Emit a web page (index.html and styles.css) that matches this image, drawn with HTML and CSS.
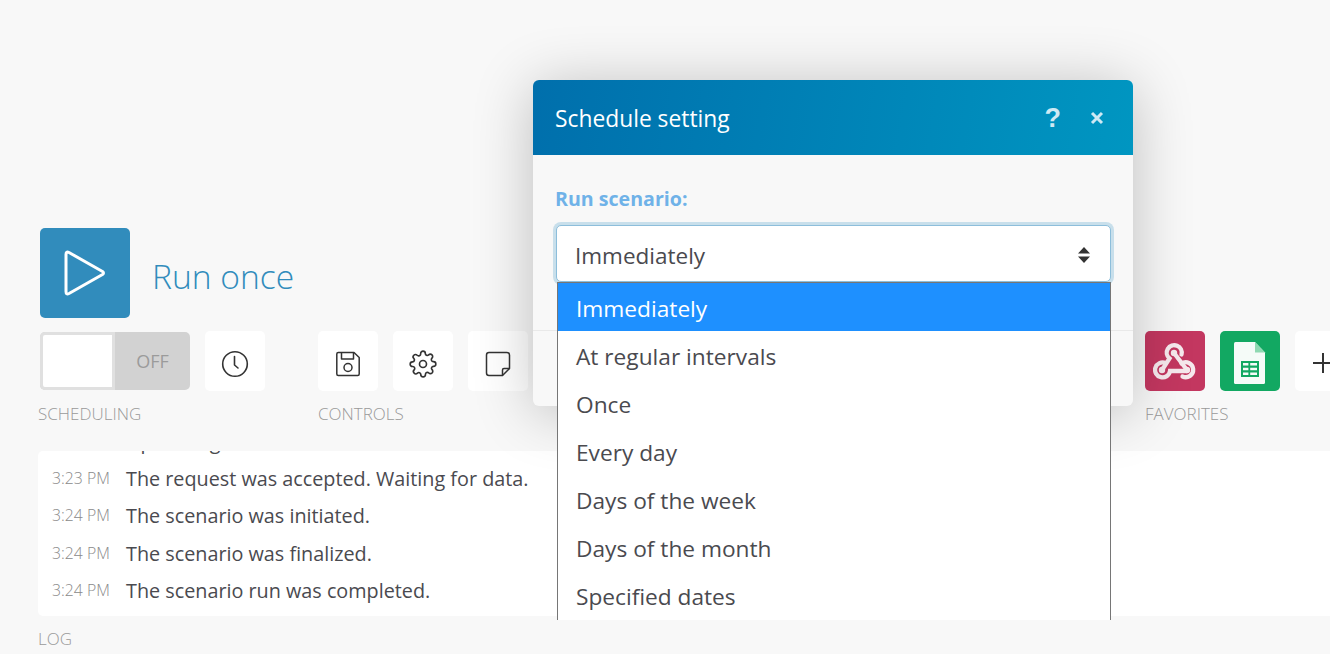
FILE: index.html
```html
<!DOCTYPE html>
<html lang="en">
<head>
<meta charset="utf-8">
<title>Schedule setting</title>
<link rel="stylesheet" href="styles.css">
</head>
<body>
<main class="page">
  <section class="run">
    <button class="run-tile" aria-label="Run once">
      <svg width="44" height="48" viewBox="0 0 44 48"><path d="M3 5.500V42.500Q3 46 6 44.500L39.500 25.500Q41.500 24 39.500 22.500L6 3.500Q3 2 3 5.500z" fill="none" stroke="#fff" stroke-width="3" stroke-linejoin="round"/></svg>
    </button>
    <span class="run-label">Run once</span>
  </section>

  <section class="toolbar">
    <div class="group group-scheduling">
      <div class="tools">
        <div class="toggle"><span class="knob"></span><span class="off">OFF</span></div>
        <button class="tool" aria-label="Schedule">
          <svg width="28" height="28" viewBox="0 0 28 28" fill="none" stroke="#333" stroke-width="1.600"><circle cx="14" cy="14" r="12.300"/><path d="M13.500 6.500v8.500l3.500 3" stroke-linecap="round" stroke-linejoin="round"/></svg>
        </button>
      </div>
      <div class="group-label">SCHEDULING</div>
    </div>
    <div class="group group-controls">
      <div class="tools">
        <button class="tool" aria-label="Save">
          <svg width="28" height="28" viewBox="0 0 28 28" fill="none" stroke="#333" stroke-width="1.500" stroke-linejoin="round"><path d="M2.800 4q0-1.500 1.500-1.500h15.700l5.200 5v16.500q0 1.500-1.500 1.500H4.300q-1.500 0-1.500-1.500z"/><path d="M7.500 2.500v6.500h12V2.500"/><circle cx="14" cy="17.500" r="4"/></svg>
        </button>
        <button class="tool" aria-label="Settings">
          <svg width="28" height="28" viewBox="0 0 24 24" fill="none" stroke="#333" stroke-width="1.400" stroke-linecap="round" stroke-linejoin="round"><circle cx="12" cy="12" r="3"/><path d="M19.400 15a1.650 1.650 0 0 0 .33 1.820l.06.060a2 2 0 1 1-2.830 2.830l-.06-.060a1.650 1.650 0 0 0-2.800 1.170V21a2 2 0 1 1-4 0v-.09a1.650 1.650 0 0 0-2.800-1.110l-.06.060a2 2 0 1 1-2.830-2.830l.06-.060a1.650 1.650 0 0 0-1.170-2.800H3a2 2 0 1 1 0-4h.09a1.650 1.650 0 0 0 1.110-2.800l-.06-.060a2 2 0 1 1 2.830-2.830l.06.060a1.650 1.650 0 0 0 1.820.33H9a1.650 1.650 0 0 0 1-1.510V3a2 2 0 1 1 4 0v.09a1.650 1.650 0 0 0 2.800 1.110l.06-.060a2 2 0 1 1 2.830 2.830l-.06.060a1.650 1.650 0 0 0-.33 1.820V9a1.650 1.650 0 0 0 1.510 1H21a2 2 0 1 1 0 4h-.09a1.650 1.650 0 0 0-1.510 1z"/></svg>
        </button>
        <button class="tool" aria-label="Notes">
          <svg width="28" height="28" viewBox="0 0 28 28" fill="none" stroke="#333" stroke-width="1.500" stroke-linejoin="round"><path d="M18.500 25.500H5q-2.500 0-2.500-2.500V5q0-2.500 2.500-2.500h18q2.500 0 2.500 2.500v13.500z"/><path d="M18.500 25.500v-5.500q0-1.500 1.500-1.500h5.500"/></svg>
        </button>
      </div>
      <div class="group-label">CONTROLS</div>
    </div>
    <div class="group group-favorites">
      <div class="tools">
        <span class="fav fav-webhook">
          <svg width="44" height="44" viewBox="0 0 44 44" fill="none" stroke="#f6e9ed" stroke-width="4.300" stroke-linecap="round"><path d="M9 31 16.500 19.500A7.500 7.500 0 1 1 28.500 15.500"/><path d="M21 14 34 31"/><path d="M12.500 24A7.500 7.500 0 1 0 17 32H34"/><path d="M28.500 24.500A7.500 7.500 0 1 1 29.500 37.500"/><circle cx="21" cy="14" r="3.200" fill="#f6e9ed" stroke="none"/><circle cx="9" cy="31" r="3.200" fill="#f6e9ed" stroke="none"/><circle cx="34" cy="31" r="3.200" fill="#f6e9ed" stroke="none"/></svg>
        </span>
        <span class="fav fav-sheets">
          <svg width="32" height="42" viewBox="0 0 32 42"><path d="M1.500 0H21l10 10.500V40.500q0 1.500-1.500 1.500h-28Q0 42 0 40.500V1.500Q0 0 1.500 0z" fill="#f5fbf8"/><path d="M21 0l10 10.500H21z" fill="#8fd9b2"/><path d="M7 19h18v16H7zM9 21v2.600h5.400V21zm7.200 0v2.600h6.800V21zM9 25.700v2.600h5.400v-2.600zm7.200 0v2.600h6.800v-2.600zM9 30.400V33h5.400v-2.600zm7.200 0V33h6.800v-2.600z" fill="#12a862" fill-rule="evenodd"/></svg>
        </span>
        <button class="tool tool-plus" aria-label="Add favorite">
          <svg width="22" height="22" viewBox="0 0 22 22" stroke="#333" stroke-width="2"><path d="M11 1v20M1 11h20"/></svg>
        </button>
      </div>
      <div class="group-label">FAVORITES</div>
    </div>
  </section>

  <section class="log">
    <div class="log-list">
      <div class="log-row"><span class="time">3:23 PM</span><span class="msg">Uploading data.</span></div>
      <div class="log-row"><span class="time">3:23 PM</span><span class="msg">The request was accepted. Waiting for data.</span></div>
      <div class="log-row"><span class="time">3:24 PM</span><span class="msg">The scenario was initiated.</span></div>
      <div class="log-row"><span class="time">3:24 PM</span><span class="msg">The scenario was finalized.</span></div>
      <div class="log-row"><span class="time">3:24 PM</span><span class="msg">The scenario run was completed.</span></div>
    </div>
    <div class="group-label log-label">LOG</div>
  </section>
</main>

<div class="modal" role="dialog" aria-label="Schedule setting">
  <header class="modal-head">
    <h2 class="modal-title">Schedule setting</h2>
    <span class="modal-actions">
      <span class="help">?</span>
      <svg class="close" width="14" height="14" viewBox="0 0 14 14" stroke="#cfe9f4" stroke-width="3"><path d="M2 2l10 10M12 2 2 12"/></svg>
    </span>
  </header>
  <div class="modal-body">
    <label class="field-label">Run scenario:</label>
    <div class="select-wrap">
      <div class="select">
        <span>Immediately</span>
        <svg width="12" height="16" viewBox="0 0 12 16" fill="#333"><path d="M6 0l6 6.500H0zM6 16 0 9.500h12z"/></svg>
      </div>
      <ul class="options">
        <li class="option selected">Immediately</li>
        <li class="option">At regular intervals</li>
        <li class="option">Once</li>
        <li class="option">Every day</li>
        <li class="option">Days of the week</li>
        <li class="option">Days of the month</li>
        <li class="option">Specified dates</li>
      </ul>
    </div>
  </div>
  <div class="modal-foot"></div>
</div>
</body>
</html>
```
FILE: styles.css
```css
* { box-sizing: border-box; }
html, body { margin: 0; height: 100%; overflow: hidden; }
body {
  background: #f8f8f8;
  font-family: "Open Sans", "Noto Sans", "Liberation Sans", sans-serif;
  color: #4a4a4f;
  width: 1330px;
  height: 654px;
  position: relative;
}
button { border: 0; padding: 0; margin: 0; font: inherit; }
.page { padding: 228px 0 0 38px; width: 1330px; }

.run { display: flex; align-items: flex-end; padding-left: 2px; height: 90px; }
.run-tile {
  width: 90px; height: 90px; border-radius: 5px; background: #318cbc;
  display: flex; align-items: center; justify-content: center;
}
.run-label { font-size: 33.6px; font-weight: 300; color: #318cbc; margin: 0 0 14px 22px; line-height: 56px; height: 56px; }

.toolbar { display: flex; margin-top: 13px; height: 120px; }
.group { flex: none; }
.group-scheduling { width: 280px; }
.group-controls { width: 827px; }
.group-favorites { width: 185px; overflow: hidden; }
.tools { display: flex; gap: 15px; height: 60px; align-items: center; }
.group-scheduling .tools { padding-left: 2px; }
.tool {
  width: 60px; height: 60px; border-radius: 5px; background: #fff;
  display: flex; align-items: center; justify-content: center; flex: none;
  padding-top: 6px;
}
.tool-plus { padding: 4px 4px 0 0; }
.fav {
  width: 60px; height: 60px; border-radius: 5px; flex: none;
  display: flex; align-items: center; justify-content: center;
}
.fav-webhook { background: #c33760; }
.fav-sheets { background: #12a862; padding-top: 3px; }
.toggle {
  width: 150px; height: 58px; border-radius: 5px; background: #d2d2d2;
  display: flex; align-items: stretch;
}
.knob { width: 75px; background: #fff; border: 3px solid #e0e0e0; border-radius: 5px 0 0 5px; }
.off { flex: 1; text-align: center; font-size: 18px; line-height: 58px; color: #9b9b9b; }
.group-label { font-size: 17px; font-weight: 300; color: #9a9a9a; line-height: 22px; margin-top: 12px; }

.log-list {
  background: #fff; height: 165px; border-radius: 5px 0 0 5px; overflow: hidden;
  display: flex; flex-direction: column; justify-content: flex-end; padding: 0 0 7px 14px;
}
.log-row { display: flex; align-items: center; height: 37.3px; line-height: 37px; flex: none; }
.time { font-size: 15.8px; font-weight: 300; color: #8a8a8a; width: 74px; flex: none; }
.msg { font-size: 19.8px; color: #4a4a4f; }
.log-label { margin-top: 12px; }

.modal {
  position: absolute; left: 533px; top: 80px; width: 600px; height: 326px;
  background: #f8f8f8; border-radius: 6px;
  box-shadow: 0 6px 60px rgba(0, 0, 0, .24);
  display: flex; flex-direction: column;
}
.modal-head {
  height: 75px; flex: none; border-radius: 6px 6px 0 0;
  background: linear-gradient(100deg, #006fac 0%, #0096c1 100%);
  display: flex; align-items: center; justify-content: space-between;
  padding: 0 29px 0 22px;
}
.modal-title { margin: 0; padding-top: 2px; font-size: 22.8px; font-weight: 400; color: #fff; }
.modal-actions { display: flex; align-items: center; gap: 29px; }
.help { font-family: "Liberation Sans", sans-serif; font-size: 27px; font-weight: 700; color: #cfe9f4; line-height: 30px; }
.modal-body { flex: 1; padding: 30px 22px 0 23px; }
.field-label { display: block; margin-left: -1px; font-size: 19.6px; font-weight: 700; color: #6fb2e8; line-height: 28px; }
.select-wrap { position: relative; margin-top: 12px; }
.select {
  height: 57px; background: #fff; border: 1px solid #8dbedb; border-radius: 5px;
  box-shadow: 0 0 0 3px #c8dfeb;
  display: flex; align-items: center; justify-content: space-between;
  padding: 3px 20px 0 18px; font-size: 22.5px; color: #4a4a4f;
}
.options {
  position: absolute; left: 1px; top: 57px; width: 554px; height: 338px;
  margin: 0; padding: 0; list-style: none; background: #fff;
  border: 1px solid #767676; border-bottom: 0; overflow: hidden;
}
.option { height: 48px; line-height: 52px; padding-left: 18px; font-size: 22.7px; color: #4a4a4f; }
.option.selected { background: #1e90ff; color: #fff; }
.modal-foot { height: 76px; flex: none; border-top: 1px solid #e9e9e9; }
```
